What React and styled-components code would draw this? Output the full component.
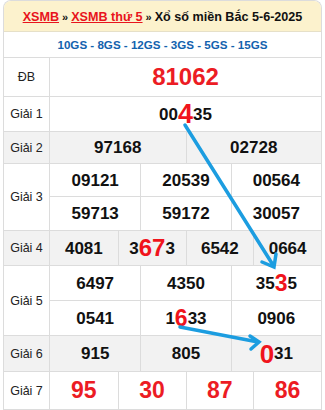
import React from "react";
import styled, { createGlobalStyle } from "styled-components";

const GlobalStyle = createGlobalStyle`
  body {
    margin: 0;
    background: #fff;
    font-family: "Liberation Sans", Arial, sans-serif;
  }
`;

const Page = styled.div`
  position: relative;
  width: 325px;
  height: 410px;
  overflow: hidden;
  padding-left: 3px;
  box-sizing: border-box;
`;

const Board = styled.div`
  width: 319px;
  border: 1px solid #dcdcdc;
  border-bottom: none;
  border-radius: 8px 8px 0 0;
  overflow: hidden;
  box-sizing: border-box;
`;

const Title = styled.div`
  height: 31px;
  background: #fcf2cd;
  border-bottom: 1px solid #e6e0c8;
  display: flex;
  align-items: center;
  justify-content: center;
  font-size: 12.6px;
  font-weight: bold;
  color: #111;
  box-sizing: border-box;
  padding-top: 1px;
  a {
    color: #e8141c;
    text-decoration: underline;
  }
`;

const Sep = styled.span`
  margin: 0 3px;
  font-size: 11px;
`;

const GsRow = styled.div`
  height: 26px;
  display: flex;
  align-items: center;
  justify-content: center;
  font-size: 11.6px;
  font-weight: bold;
  color: #1262ae;
  border-bottom: 1px solid #dcdcdc;
  box-sizing: border-box;
`;

const Prize = styled.div`
  display: flex;
  background: ${(p) => (p.$gray ? "#f2f2f2" : "#fff")};
  border-bottom: 1px solid #dcdcdc;
`;

const Label = styled.div`
  width: 45px;
  flex: none;
  border-right: 1px solid #dcdcdc;
  display: flex;
  align-items: center;
  justify-content: center;
  font-size: 12.5px;
  color: #222;
`;

const Lines = styled.div`
  flex: 1;
  display: flex;
  flex-direction: column;
`;

const Line = styled.div`
  height: ${(p) => p.$h}px;
  display: grid;
  grid-template-columns: repeat(${(p) => p.$cols}, 1fr);
  & + & {
    border-top: 1px solid #dcdcdc;
  }
`;

const Cell = styled.div`
  display: flex;
  align-items: center;
  justify-content: center;
  font-weight: bold;
  font-size: ${(p) => p.$size || 17}px;
  color: ${(p) => (p.$red ? "#ec1c24" : "#111")};
  line-height: 1;
  white-space: nowrap;
  & + & {
    border-left: 1px solid #dcdcdc;
  }
`;

const Big = styled.span`
  color: #f0141c;
  font-size: ${(p) => p.$size || 24}px;
  line-height: 1;
`;

const Footer = styled.div`
  height: 10px;
  background: #fbf8ee;
`;

const Arrows = styled.svg`
  position: absolute;
  left: 0;
  top: 0;
  pointer-events: none;
`;

const n = (s) => ({ text: s });

const prizes = [
  { label: "ĐB", lines: [{ h: 38, cells: [{ text: "81062", red: true, size: 24 }] }] },
  {
    label: "Giải 1",
    lines: [{ h: 34, cells: [{ parts: ["00", "4", "35"], big: 27 }] }],
  },
  { label: "Giải 2", gray: true, lines: [{ h: 31, cells: [n("97168"), n("02728")] }] },
  {
    label: "Giải 3",
    lines: [
      { h: 32, cells: [n("09121"), n("20539"), n("00564")] },
      { h: 33, cells: [n("59713"), n("59172"), n("30057")] },
    ],
  },
  {
    label: "Giải 4",
    gray: true,
    lines: [
      {
        h: 34,
        cells: [n("4081"), { parts: ["3", "67", "3"], big: 24 }, n("6542"), n("0664")],
      },
    ],
  },
  {
    label: "Giải 5",
    lines: [
      { h: 34, cells: [n("6497"), n("4350"), { parts: ["35", "3", "5"], big: 23 }] },
      { h: 34, cells: [n("0541"), { parts: ["1", "6", "33"], big: 23 }, n("0906")] },
    ],
  },
  {
    label: "Giải 6",
    gray: true,
    lines: [{ h: 35, cells: [n("915"), n("805"), { parts: ["", "0", "31"], big: 26 }] }],
  },
  {
    label: "Giải 7",
    lines: [
      {
        h: 37,
        cells: [
          { text: "95", red: true, size: 23 },
          { text: "30", red: true, size: 23 },
          { text: "87", red: true, size: 23 },
          { text: "86", red: true, size: 23 },
        ],
      },
    ],
  },
];

const App = () => {
  return (
    <>
      <GlobalStyle />
      <Page>
        <Board>
          <Title>
            <a>XSMB</a>
            <Sep>»</Sep>
            <a>XSMB thứ 5</a>
            <Sep>»</Sep>
            <span>Xổ số miền Bắc 5-6-2025</span>
          </Title>
          <GsRow>10GS - 8GS - 12GS - 3GS - 5GS - 15GS</GsRow>
          {prizes.map((p) => (
            <Prize key={p.label} $gray={p.gray}>
              <Label>{p.label}</Label>
              <Lines>
                {p.lines.map((line, i) => (
                  <Line key={i} $h={line.h} $cols={line.cells.length}>
                    {line.cells.map((c, j) => (
                      <Cell key={j} $red={c.red} $size={c.size}>
                        {c.parts ? (
                          <>
                            {c.parts[0]}
                            <Big $size={c.big}>{c.parts[1]}</Big>
                            {c.parts[2]}
                          </>
                        ) : (
                          c.text
                        )}
                      </Cell>
                    ))}
                  </Line>
                ))}
              </Lines>
            </Prize>
          ))}
          <Footer />
        </Board>
        <Arrows width="325" height="410" viewBox="0 0 325 410">
          <g stroke="#1c9de0" strokeWidth="3.5" fill="none" strokeLinecap="round">
            <line x1="185" y1="125" x2="273" y2="265" />
            <polyline points="262,262 274,267 276,254" />
            <line x1="180" y1="327" x2="258" y2="342" />
            <polyline points="250,336 259,342 251,349" />
          </g>
        </Arrows>
      </Page>
    </>
  );
};

export default App;
